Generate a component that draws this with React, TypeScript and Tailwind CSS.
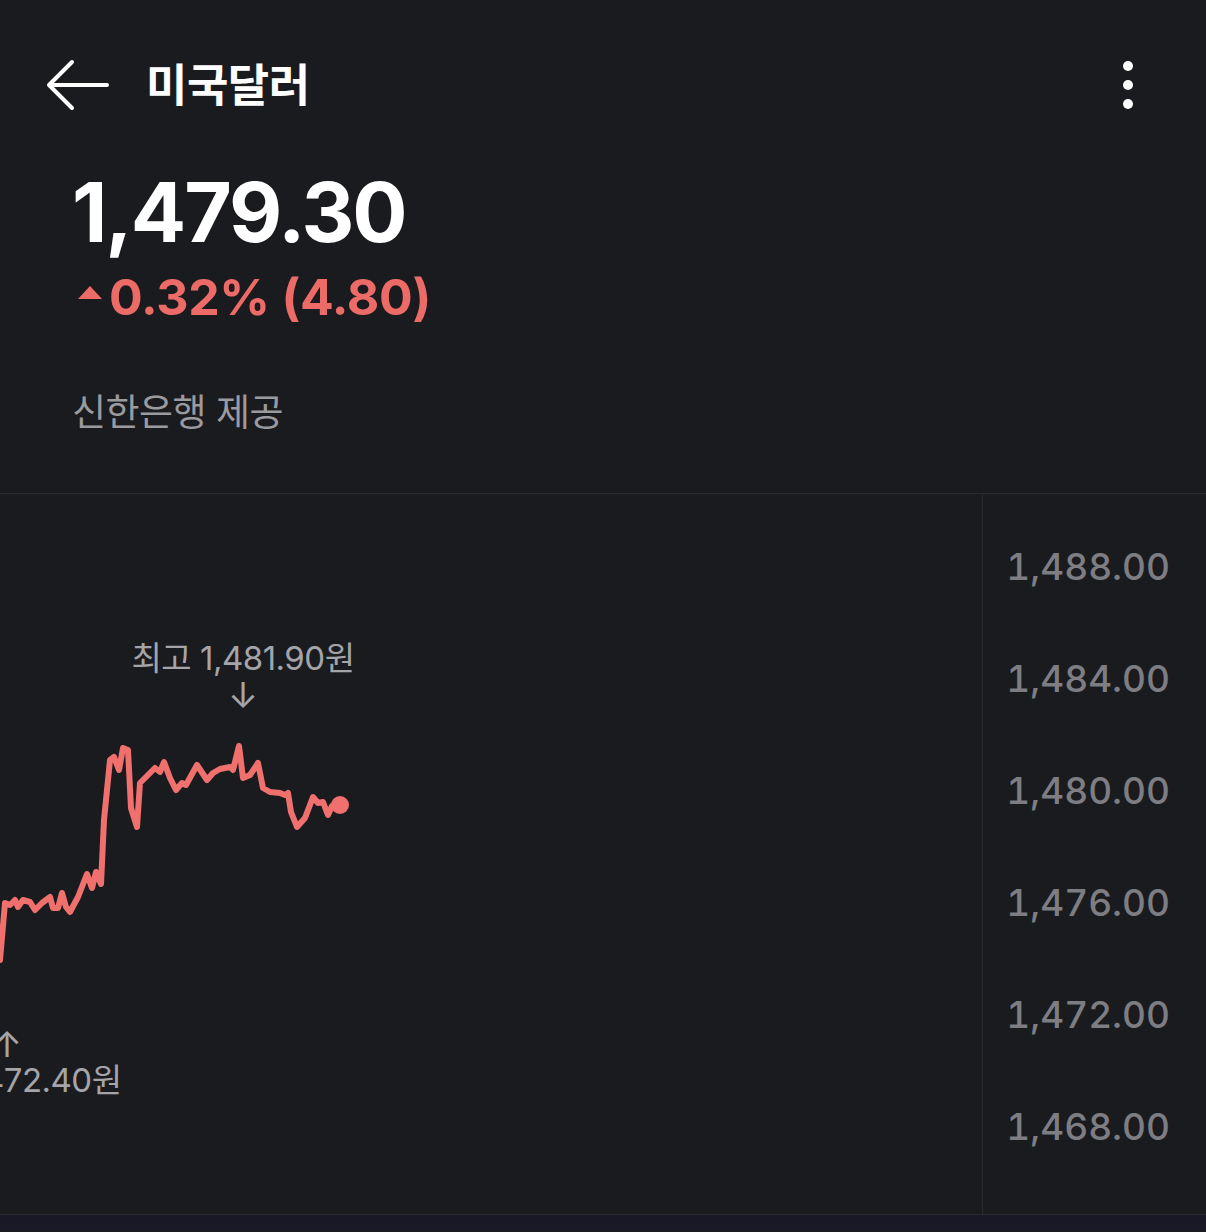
const font = "font-['Inter','Noto_Sans_CJK_KR',sans-serif]";

// chart points in page coordinates, shifted to the chart panel below
const raw: [number, number][] = [
  [0, 960], [5, 903], [10, 905], [15, 900], [18, 907], [23, 900], [30, 902], [35, 910],
  [42, 903], [50, 897], [53, 908], [58, 908], [62, 893], [66, 907], [70, 912], [78, 897],
  [87, 874], [92, 888], [96, 872], [101, 884], [104, 820], [110, 760], [114, 757], [119, 770],
  [123, 748], [128, 750], [131, 808], [137, 827], [140, 783], [148, 775], [155, 768], [160, 772],
  [164, 762], [170, 778], [176, 790], [182, 783], [186, 785], [197, 765], [207, 780], [213, 773],
  [220, 769], [230, 767], [233, 770], [239, 746], [243, 778], [250, 775], [258, 763], [263, 788],
  [270, 792], [280, 793], [285, 795], [288, 793], [291, 812], [297, 827], [305, 818], [313, 797],
  [318, 803], [323, 802], [328, 815], [332, 806], [340, 805],
];
const TOP = 494;
const points = raw.map(([x, y]) => `${x},${y - TOP}`).join(" ");

const axis = ["1,488.00", "1,484.00", "1,480.00", "1,476.00", "1,472.00", "1,468.00"];

function Header() {
  return (
    <header className="flex h-[172px] items-start justify-between pl-[46px] pr-[73px] pt-[58px]">
      <div className="flex items-center gap-[36px]">
        <svg width="64" height="54" viewBox="0 0 64 54" className="text-white">
          <path
            d="M3 27 H61 M26 4 L3 27 L26 50"
            fill="none"
            stroke="currentColor"
            strokeWidth="4"
            strokeLinecap="round"
            strokeLinejoin="round"
          />
        </svg>
        <h1 className="text-[45px] font-bold leading-none tracking-[-0.5px] text-white">미국달러</h1>
      </div>
      <div className="flex flex-col items-center gap-[9px] pt-[3px]">
        <span className="h-[10px] w-[10px] rounded-full bg-white" />
        <span className="h-[10px] w-[10px] rounded-full bg-white" />
        <span className="h-[10px] w-[10px] rounded-full bg-white" />
      </div>
    </header>
  );
}

function Quote() {
  return (
    <section className="h-[321px] pl-[72px]">
      <div className="text-[82px] font-bold leading-none tracking-[-2px] text-white">1,479.30</div>
      <div className="mt-[18px] flex items-center pl-[5px] text-[50px] font-bold leading-none tracking-[-0.3px] text-[#ec6b67]">
        <svg width="26" height="16" viewBox="0 0 26 16" className="mr-[6px] mt-[-8px]">
          <path d="M13 1 L25 14 L1 14 Z" fill="#ec6b67" strokeLinejoin="round" />
        </svg>
        0.32% (4.80)
      </div>
      <div className="mt-[72px] text-[37px] leading-none tracking-[-0.5px] text-[#9a9a9f]">신한은행 제공</div>
    </section>
  );
}

function Chart() {
  return (
    <section className="flex h-[722px] border-y border-[#2a2b30]">
      <div className="relative w-[983px] overflow-hidden border-r border-[#2a2b30]">
        <svg width="983" height="720" viewBox="0 0 983 720" className="absolute inset-0">
          <polyline
            points={points}
            fill="none"
            stroke="#ef706c"
            strokeWidth="6"
            strokeLinejoin="round"
            strokeLinecap="round"
          />
          <circle cx="340" cy={805 - TOP} r="9" fill="#ef706c" />
        </svg>
        <div className="absolute left-[243px] top-[148px] flex -translate-x-1/2 flex-col items-center text-[#a4a4a9]">
          <span className="whitespace-nowrap text-[33px] leading-none tracking-[-0.5px]">최고 1,481.90원</span>
          <span className="mt-[2px] text-[36px] leading-none">↓</span>
        </div>
        <div className="absolute left-[7px] top-[532px] flex -translate-x-1/2 flex-col items-center text-[#a4a4a9]">
          <span className="text-[36px] leading-none">↑</span>
          <span className="mt-[2px] whitespace-nowrap text-[33px] leading-none tracking-[-0.5px]">최저 1,472.40원</span>
        </div>
      </div>
      <div className="flex flex-1 flex-col items-end pr-[36px] pt-[16px]">
        {axis.map((v) => (
          <div key={v} className="flex h-[112px] items-center text-[37px] font-medium leading-none tabular-nums text-[#7d7d82]">
            {v}
          </div>
        ))}
      </div>
    </section>
  );
}

export default function App() {
  return (
    <div className={`${font} h-[1232px] w-[1206px] overflow-hidden bg-[#1a1b1f]`}>
      <Header />
      <Quote />
      <Chart />
      <div className="h-[16px] bg-[#181826]" />
    </div>
  );
}
